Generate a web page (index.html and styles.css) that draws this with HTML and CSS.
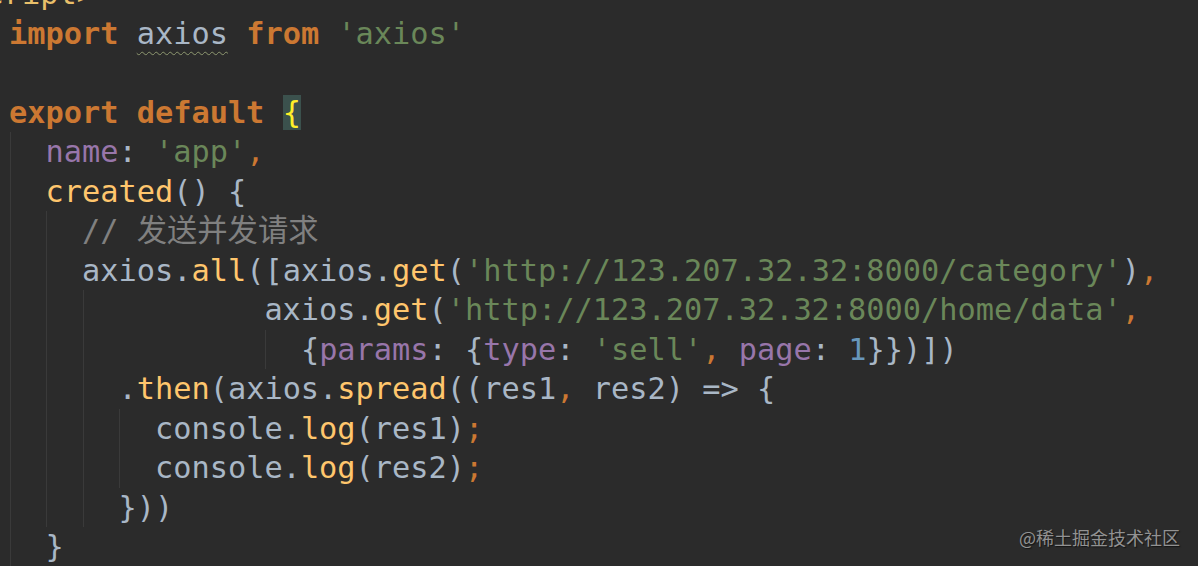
FILE: index.html
```html
<!DOCTYPE html>
<html lang="zh">
<head>
<meta charset="utf-8">
<title>axios.all</title>
<link rel="stylesheet" href="styles.css">
</head>
<body>
<div class="editor">
<div class="code">
<div class="ln top"><span class="tag">&lt;script&gt;</span></div>
<div class="ln"><span class="kw">import</span> <span class="sq">axios</span> <span class="kw">from</span> <span class="str">'axios'</span></div>
<div class="ln"></div>
<div class="ln"><span class="kw">export default</span> <span class="match">{</span></div>
<div class="ln"><span class="g">  </span><span class="prop">name</span>: <span class="str">'app'</span><span class="punc">,</span></div>
<div class="ln"><span class="g">  </span><span class="fn">created</span>() {</div>
<div class="ln"><span class="g">  </span><span class="g">  </span><span class="cm">// 发送并发请求</span></div>
<div class="ln"><span class="g">  </span><span class="g">  </span>axios.<span class="fn">all</span>([axios.<span class="fn">get</span>(<span class="str">'http://123.207.32.32:8000/category'</span>)<span class="punc">,</span></div>
<div class="ln"><span class="g">  </span><span class="g">  </span><span class="g">  </span>        axios.<span class="fn">get</span>(<span class="str">'http://123.207.32.32:8000/home/data'</span><span class="punc">,</span></div>
<div class="ln"><span class="g">  </span><span class="g">  </span><span class="g">  </span>        <span class="g">  </span>{<span class="prop">params</span>: {<span class="prop">type</span>: <span class="str">'sell'</span><span class="punc">,</span> <span class="prop">page</span>: <span class="num">1</span>}})])</div>
<div class="ln"><span class="g">  </span><span class="g">  </span><span class="g">  </span>.<span class="fn">then</span>(axios.<span class="fn">spread</span>((res1<span class="punc">,</span> res2) =&gt; {</div>
<div class="ln"><span class="g">  </span><span class="g">  </span><span class="g">  </span><span class="g">  </span>console.<span class="fn">log</span>(res1)<span class="punc">;</span></div>
<div class="ln"><span class="g">  </span><span class="g">  </span><span class="g">  </span><span class="g">  </span>console.<span class="fn">log</span>(res2)<span class="punc">;</span></div>
<div class="ln"><span class="g">  </span><span class="g">  </span><span class="g">  </span>}))</div>
<div class="ln"><span class="g">  </span>}</div>
</div>
<div class="mark">@稀土掘金技术社区</div>
</div>
</body>
</html>
```

FILE: styles.css
```css
html, body {
  margin: 0;
  padding: 0;
  background: #2b2b2b;
  overflow: hidden;
}

.editor {
  position: relative;
  width: 1198px;
  height: 566px;
  overflow: hidden;
  background: #2b2b2b;
}

.code {
  margin-top: -26px;
  padding-left: 9px;
  font-family: "DejaVu Sans Mono", "Noto Sans CJK SC", monospace;
  font-size: 30.3px;
  line-height: 39.5px;
  color: #a9b7c6;
}

.ln {
  height: 39.5px;
  white-space: pre;
}

.top {
  text-indent: -60px;
}

.g {
  display: inline-block;
  height: 39.5px;
  vertical-align: top;
  background: linear-gradient(to right, transparent 1px, #3a3a3a 1px, #3a3a3a 2px, transparent 2px);
}

.kw {
  color: #cc7832;
  font-weight: bold;
}

.str {
  color: #6a8759;
}

.prop {
  color: #9876aa;
}

.fn {
  color: #ffc66d;
}

.cm {
  color: #808080;
}

.num {
  color: #6897bb;
}

.punc {
  color: #cc7832;
}

.tag {
  color: #e8bf6a;
}

.sq {
  text-decoration: underline wavy #8e9870;
  text-decoration-thickness: 1px;
  text-underline-offset: 7px;
}

.match {
  color: #ffef28;
  background: #3b514d;
}

.mark {
  position: absolute;
  right: 18px;
  bottom: 17px;
  font-family: "Noto Sans CJK SC", sans-serif;
  font-size: 18px;
  line-height: 24px;
  color: #929292;
  text-shadow: 1px 1px 1px #141414;
}
```
